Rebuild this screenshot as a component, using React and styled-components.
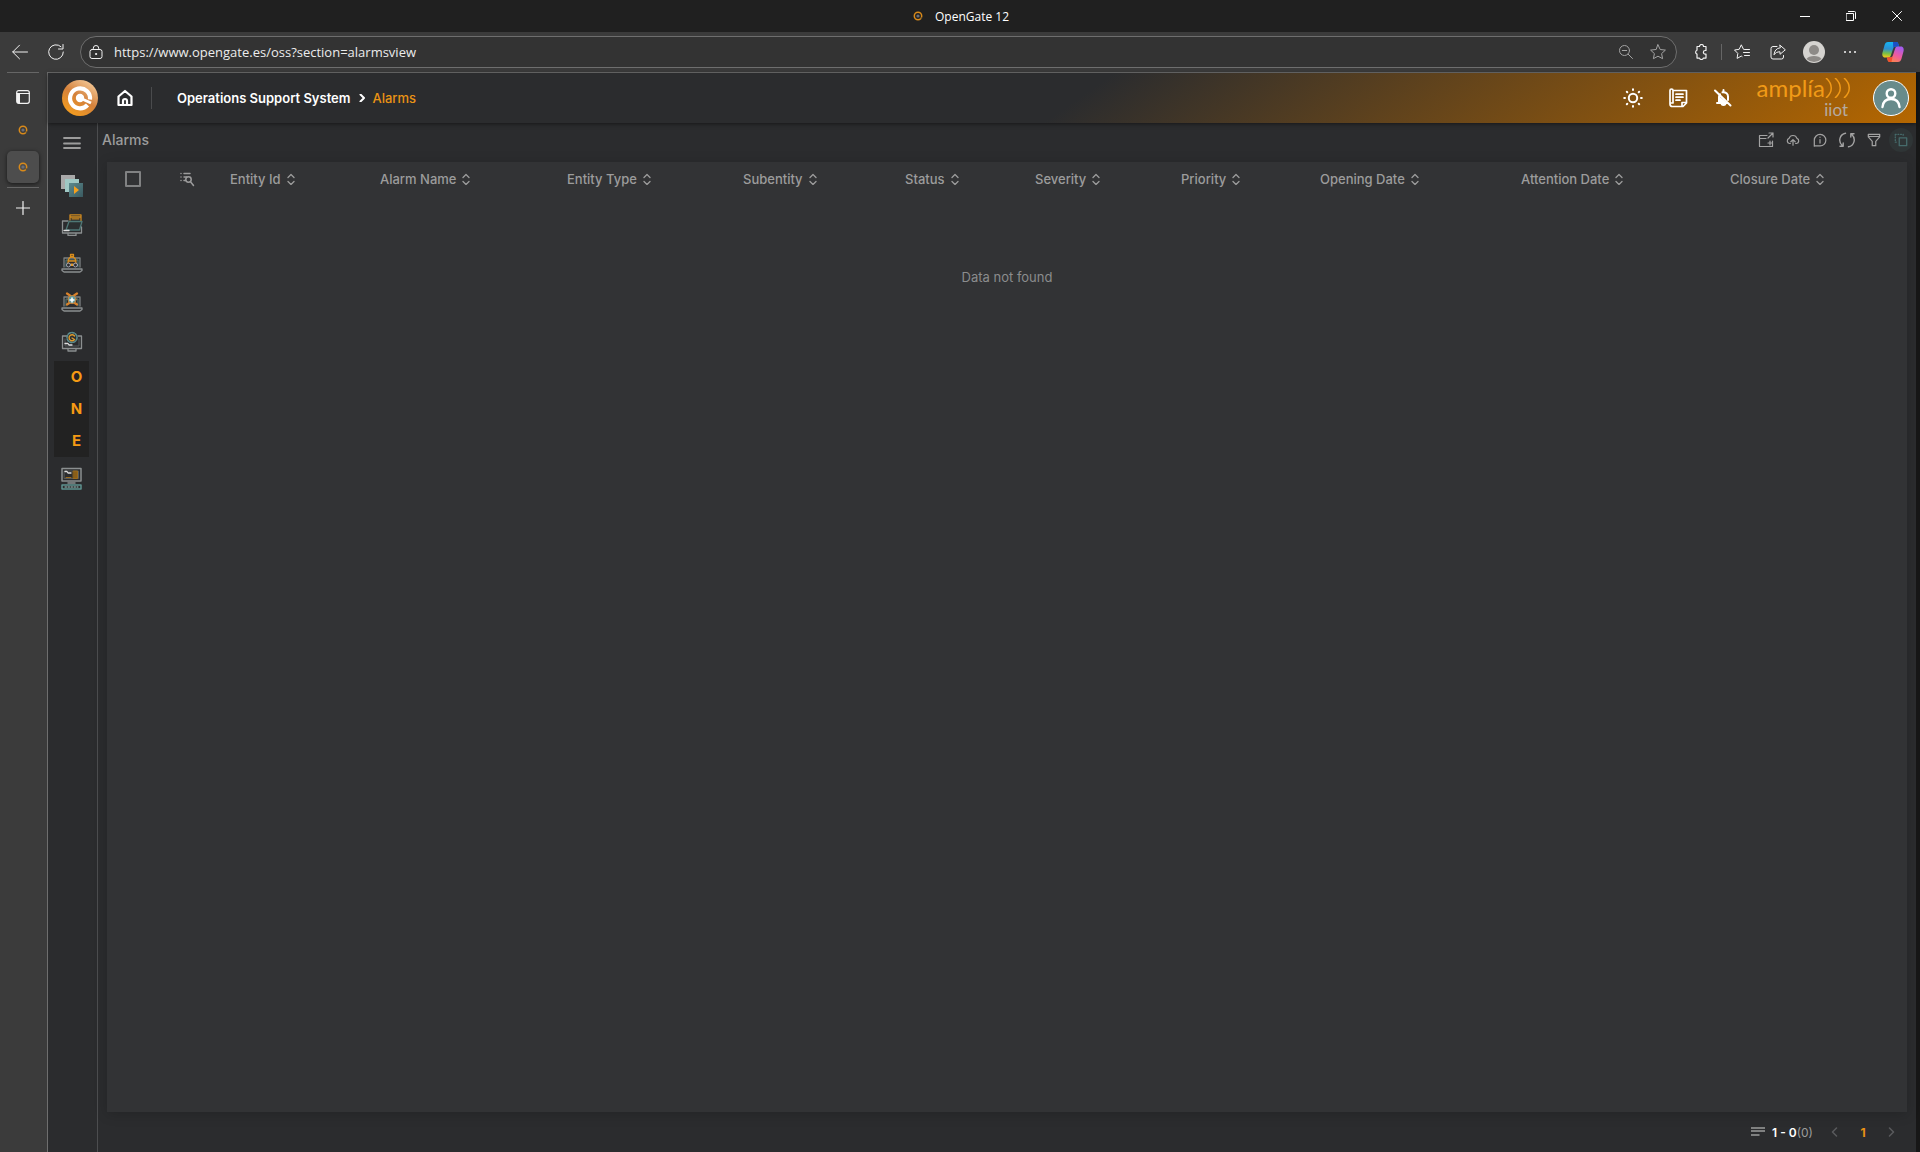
import React from 'react'
import styled, { createGlobalStyle } from 'styled-components'

const columns = [
  { label: 'Entity Id', width: 150 },
  { label: 'Alarm Name', width: 187 },
  { label: 'Entity Type', width: 176 },
  { label: 'Subentity', width: 162 },
  { label: 'Status', width: 130 },
  { label: 'Severity', width: 146 },
  { label: 'Priority', width: 139 },
  { label: 'Opening Date', width: 201 },
  { label: 'Attention Date', width: 209 },
  { label: 'Closure Date', width: 185 },
]

const Icon = ({ size = 16, box = 16, width = 1, children }) => (
  <svg width={size} height={size} viewBox={`0 0 ${box} ${box}`} fill="none" stroke="currentColor" strokeWidth={width} strokeLinecap="round" strokeLinejoin="round">
    {children}
  </svg>
)

const Favicon = () => (
  <svg width="10" height="10" viewBox="0 0 10 10" fill="none">
    <circle cx="5" cy="5" r="3.7" stroke="#d98a1a" strokeWidth="1.5" />
    <circle cx="5" cy="5" r="1.6" fill="#6b6f78" />
    <path d="M7.500 6.500l1.500 1" stroke="#54492f" strokeWidth="1.200" />
  </svg>
)

const GateLogo = () => (
  <svg width="36" height="36" viewBox="0 0 36 36" fill="none">
    <defs>
      <linearGradient id="gate" x1="0.2" y1="1" x2="0.85" y2="0">
        <stop offset="0" stopColor="#f7a01c" />
        <stop offset="0.5" stopColor="#d4813b" />
        <stop offset="1" stopColor="#f6cfa0" />
      </linearGradient>
    </defs>
    <circle cx="18" cy="18" r="18" fill="url(#gate)" />
    <path d="M28 19.500A10 10 0 1 0 25.500 25" stroke="#fff" strokeWidth="4.200" />
    <circle cx="18" cy="18" r="4.200" fill="#fff" />
    <path d="M19 18.500L29 23" stroke="#fff" strokeWidth="3" />
  </svg>
)

const CopilotLogo = () => (
  <svg width="22" height="20" viewBox="0 0 22 20">
    <defs>
      <linearGradient id="cpLeft" x1="0.4" y1="0" x2="0.3" y2="1">
        <stop offset="0" stopColor="#12b5f5" />
        <stop offset="0.45" stopColor="#2f8fd0" />
        <stop offset="0.75" stopColor="#7bc143" />
        <stop offset="1" stopColor="#f5c91a" />
      </linearGradient>
      <linearGradient id="cpRight" x1="0.7" y1="0" x2="0.2" y2="1">
        <stop offset="0" stopColor="#a45cf0" />
        <stop offset="0.5" stopColor="#ee5aa0" />
        <stop offset="1" stopColor="#fb8a45" />
      </linearGradient>
    </defs>
    <path d="M6 0h8c2 0 2.400 1.500 3 4.500h-3c-2 0-2.600 1-3 2.500L9 13c-.5 1.800-1.500 2.500-3 2.500H3C.5 15.500 0 13 .4 11L2.600 3C3.200 1 4.200 0 6 0z" fill="url(#cpLeft)" />
    <path d="M11 0h3.500c1.500 0 2 1.500 2.700 4.500H14c-1.500 0-2.200.8-2.700 2.200z" fill="#1b4fc4" />
    <path d="M16 20H8c-2 0-2.400-1.500-3-4.500h3c2 0 2.600-1 3-2.500l2-6c.5-1.800 1.500-2.500 3-2.500h3c2.500 0 3 2.500 2.600 4.500l-2.200 8c-.6 2-1.600 3-3.400 3z" fill="url(#cpRight)" />
    <path d="M5 15.500h3c1.500 0 2.300-.6 2.800-2L9.500 20H8c-2 0-2.400-1.500-3-4.500z" fill="#f4502c" />
  </svg>
)

const SortIcon = () => (
  <Icon size={12} box={12} width={1.3}>
    <path d="M3 4.500l3-3 3 3M3 8.500l3 3 3-3" />
  </Icon>
)

const Laptop = () => (
  <>
    <path d="M3 14V5h16v9" stroke="#7c8081" strokeWidth="1.300" />
    <path d="M5 14V7h12v7" stroke="#527d7b" />
    <path d="M1 16h20v1.500l-2 1.500H3l-2-1.500z" stroke="#8b8f90" strokeWidth="1.300" />
  </>
)

const Monitor = () => (
  <>
    <path d="M6 5H1.500v12.500h19V5H17" stroke="#8b8f90" strokeWidth="1.300" />
    <path d="M4 8v7h14V8" stroke="#55595a" />
    <path d="M7 18v2h8v-2" stroke="#8b8f90" strokeWidth="1.300" />
    <path d="M4 12.500h3l1 1.500h3" stroke="#ddd" strokeWidth="1.300" />
  </>
)

const MediaIcon = () => (
  <Icon size={22} box={22}>
    <defs>
      <linearGradient id="tile" x1="0" y1="0" x2="1" y2="1">
        <stop offset="0" stopColor="#5b8a8d" />
        <stop offset="1" stopColor="#3a5a60" />
      </linearGradient>
    </defs>
    <path d="M0 0h14v14H0z" fill="#a9a9a9" stroke="none" />
    <path d="M4 4h14v13H4z" fill="#9fc8c4" stroke="none" />
    <path d="M8 8h14v14H8z" fill="url(#tile)" stroke="none" />
    <path d="M13 11l5 4-5 4z" fill="#f5a01d" stroke="none" />
  </Icon>
)

const FolderIcon = () => (
  <Icon size={22} box={22}>
    <path d="M1.500 7v12h19v-6M1.500 7H7M7 20v1.500h8V20" stroke="#8b8f90" strokeWidth="1.300" />
    <path d="M9 6V.8h11V7M9 3h11M11 4.800h7" stroke="#d08a1f" strokeWidth="1.300" />
    <path d="M5 16L8 7.500h13L18.500 16z" stroke="#4e7775" strokeWidth="1.300" fill="#2b2f30" />
    <path d="M3 16.500h5" stroke="#ddd" strokeWidth="1.300" />
  </Icon>
)

const WorkerIcon = () => (
  <Icon size={22} box={22}>
    <Laptop />
    <path d="M7 10c0-4 1-6 4-6s4 2 4 6M7 8h8M9.500 1.500h3v2h-3z" stroke="#d98d1c" strokeWidth="1.300" />
    <path d="M9.500 10.500h3V13h-3z" fill="#e09a2c" stroke="none" />
    <circle cx="7.500" cy="12" r="2" stroke="#a4a4b0" />
    <circle cx="14.500" cy="12" r="2" stroke="#a4a4b0" />
  </Icon>
)

const ClockIcon = () => (
  <Icon size={22} box={22}>
    <Laptop />
    <path d="M6 1.500l3 2M16 1.500l-3 2M6 12.500l3-2M16 12.500l-3-2" stroke="#d9822b" strokeWidth="2.200" />
    <circle cx="11" cy="7.500" r="4" fill="#5b9aa0" stroke="#c9853a" />
    <path d="M11 6v4M9 8h4" stroke="#fff" strokeWidth="1.500" />
  </Icon>
)

const GearIcon = () => (
  <Icon size={22} box={22}>
    <Monitor />
    <circle cx="11" cy="6.500" r="5" stroke="#5b8b8c" strokeWidth="1.600" strokeDasharray="2.400 1.400" fill="#2b3032" />
    <path d="M13.500 5a3 3 0 1 0 0 3.500L11 7" stroke="#e09a2c" strokeWidth="1.400" />
  </Icon>
)

const TerminalIcon = () => (
  <Icon size={23} box={23}>
    <path d="M2 1.500h19v12.500H2zM8 16h7" stroke="#8b8f90" strokeWidth="1.500" />
    <path d="M4.500 4h14v7.500h-14z" stroke="#55595a" />
    <path d="M5 4.500h2l1 1.500h3" stroke="#ddd" strokeWidth="1.300" />
    <path d="M13.500 4h4v7.500h-4zM6 10.500h5" stroke="#9a6a1c" fill="#8a5e18" />
    <path d="M2 18h19v4H2z" stroke="#5f9290" strokeWidth="1.500" />
    <path d="M5 20h13" stroke="#a5c9c6" strokeDasharray="1.500 1.500" />
  </Icon>
)

const navBefore = [
  { name: 'Media', icon: <MediaIcon /> },
  { name: 'Inventory', icon: <FolderIcon /> },
  { name: 'Operations', icon: <WorkerIcon /> },
  { name: 'Schedules', icon: <ClockIcon /> },
  { name: 'Settings', icon: <GearIcon /> },
]

const TitleBar = () => (
  <TitleBarContainer>
    <TitleText><Favicon />OpenGate 12</TitleText>
    <WindowButtons>
      <WindowButton aria-label="Minimize"><Icon size={10} box={10}><path d="M0 5.500h10" /></Icon></WindowButton>
      <WindowButton aria-label="Restore"><Icon size={10} box={10}><path d="M.5 2.500h7v7h-7zM2.500 .5h6a1 1 0 0 1 1 1v6" /></Icon></WindowButton>
      <WindowButton aria-label="Close"><Icon size={10} box={10}><path d="M.5 .5l9 9M9.500 .5l-9 9" /></Icon></WindowButton>
    </WindowButtons>
  </TitleBarContainer>
)

const BrowserBar = () => (
  <BrowserBarContainer>
    <BrowserButton aria-label="Back"><Icon><path d="M15.500 8H.8M7.500 1.200L.7 8l6.800 6.800" /></Icon></BrowserButton>
    <BrowserButton aria-label="Reload"><Icon><path d="M15.300 8A7.300 7.300 0 1 1 13 2.700M15 .5V5h-4.500" /></Icon></BrowserButton>
    <AddressBar>
      <Icon size={14} box={14}><rect x="1" y="4.500" width="12" height="9" rx="2" /><path d="M4.300 4.500V3.200a2.700 2.700 0 0 1 5.400 0v1.300" /><circle cx="7" cy="9" r=".6" fill="currentColor" /></Icon>
      <UrlInput aria-label="Address" defaultValue="https://www.opengate.es/oss?section=alarmsview" />
      <BarButton $muted aria-label="Zoom"><Icon size={14} box={14}><circle cx="5.500" cy="5.500" r="5" /><path d="M9.200 9.200l4.300 4.300M3.300 5.500h4.400" /></Icon></BarButton>
      <BarButton $muted aria-label="Add favorite"><Icon><path d="M8 .8l2.200 4.700 5.200.6-3.800 3.500 1 5.100L8 12.200l-4.600 2.500 1-5.100L.6 6.100l5.200-.6z" /></Icon></BarButton>
    </AddressBar>
    <BrowserTools>
      <BarButton aria-label="Extensions"><Icon width={1.2}><path d="M4 2.500h2.500a2 2 0 0 1 4 0H13v4h-.8a1.800 1.800 0 0 0 0 3.600h.8v4h-2.700a2 2 0 0 1-3.800 0H4v-4a2 2 0 0 1 0-3.800z" /></Icon></BarButton>
      <BarDivider />
      <BarButton aria-label="Favorites"><Icon><path d="M9.500 5.300L7.300.8 5.200 5.300.5 6l3.300 3.400-.7 5 4.200-2.300.8.500M10.500 5.500h5M9.500 8.500h6M10.500 11.500h5" /></Icon></BarButton>
      <BarButton aria-label="Share"><Icon><path d="M7 2.500H3a2 2 0 0 0-2 2V13a2 2 0 0 0 2 2h8.500a2 2 0 0 0 2-2v-1.500M10 1.200l5.300 4.600L10 10.300V7.800c-2.800 0-4.500.9-6 3 .4-4 2.400-6.600 6-7z" /></Icon></BarButton>
      <BarButton aria-label="Profile">
        <svg width="22" height="22" viewBox="0 0 22 22"><circle cx="11" cy="11" r="11" fill="#d5d3d0" /><circle cx="11" cy="9" r="5" fill="#8d8a87" /><path d="M3.500 18c2-4 13-4 15 0a11 11 0 0 1-15 0z" fill="#8d8a87" /></svg>
      </BarButton>
      <BarButton aria-label="More"><Icon width={2}><path d="M3 8h.01M8 8h.01M13 8h.01" /></Icon></BarButton>
    </BrowserTools>
    <BarButton aria-label="Copilot"><CopilotLogo /></BarButton>
  </BrowserBarContainer>
)

const TabStrip = () => (
  <TabStripContainer>
    <StripLine />
    <StripButton aria-label="Vertical tabs" $top={8}><Icon size={14} box={14} width={1.2}><rect x=".7" y=".7" width="12.600" height="12.600" rx="2" /><path d="M.7 3.500h12.600" /><path d="M1 4h3v9H1z" fill="currentColor" stroke="none" /></Icon></StripButton>
    <StripButton aria-label="OpenGate 12" $top={1}><Favicon /></StripButton>
    <StripButton aria-label="OpenGate 12, current" $active $top={5}><Favicon /></StripButton>
    <StripGap />
    <StripLine />
    <StripButton aria-label="New tab" $top={4}><Icon size={14} box={14} width={1.2}><path d="M7 .5v13M.5 7h13" /></Icon></StripButton>
  </TabStripContainer>
)

const Header = () => (
  <HeaderContainer>
    <HomeLink href="#" aria-label="OpenGate"><GateLogo /></HomeLink>
    <HeaderButton aria-label="Home"><Icon size={18} box={18} width={2.2}><path d="M2.500 7.500L9 2l6.500 5.500V16h-13zM7 16v-4a2 2 0 0 1 4 0v4" /></Icon></HeaderButton>
    <HeaderDivider />
    <Breadcrumb aria-label="Breadcrumb">
      <CrumbLink href="#">Operations Support System</CrumbLink>
      <Icon size={8} box={8} width={2}><path d="M2.500 .5L6 4 2.500 7.500" /></Icon>
      <CrumbLink href="#" $current>Alarms</CrumbLink>
    </Breadcrumb>
    <HeaderActions>
      <HeaderButton aria-label="Theme"><Icon size={20} box={20} width={2}><circle cx="10" cy="10" r="4.200" /><path d="M10 1.200v.8M10 18v.8M1.200 10H2M18 10h.8M3.800 3.800l.5.500M15.700 15.700l.5.500M3.800 16.200l.5-.5M15.700 4.300l.5-.5" /></Icon></HeaderButton>
      <HeaderButton aria-label="Logs"><Icon size={20} box={20} width={1.7}><path d="M5 15V2.500a1.500 1.500 0 0 0-3 0V16a2.500 2.500 0 0 0 2.500 2.500H15l3.500-3.500V2.500H5M5 15H2M8 6.200h7M8 9.200h7M8 12.200h4M14 18v-3.500h4" /></Icon></HeaderButton>
      <HeaderButton aria-label="Notifications off"><Icon size={20} box={20} width={2}><path d="M4 15h11M6 14V9c0-1 .3-2 1-2.800M15 12V8.500C15 6 13 4 9.500 4.300M10.500 2v2M2 2.500l15.500 15" /><path d="M6 8l7 6H6zM7.500 15h6a3 3 0 0 1-6 0z" fill="currentColor" stroke="none" /></Icon></HeaderButton>
    </HeaderActions>
    <Brand>
      <BrandName>
        amplía
        <svg width="26" height="20" viewBox="0 0 26 20" fill="none" stroke="currentColor" strokeWidth="1.500"><path d="M1 0c7 6 7 14 0 20M10 0c7 6 7 14 0 20M19 0c7 6 7 14 0 20" /></svg>
      </BrandName>
      <BrandSub>iiot</BrandSub>
    </Brand>
    <UserButton aria-label="User"><Icon size={22} box={22} width={2.4}><circle cx="11" cy="6.500" r="4.300" /><path d="M2.500 20c.5-5.500 4-8 8.500-8s8 2.500 8.500 8" /></Icon></UserButton>
  </HeaderContainer>
)

const SideNav = () => (
  <SideNavContainer>
    <NavButton aria-label="Menu" $height={41}><Icon size={18} box={18} width={1.8}><path d="M1 3h16M1 8.500h16M1 13h16" /></Icon></NavButton>
    <NavGap />
    {navBefore.map((n) => (
      <NavButton key={n.name} aria-label={n.name} $height={39}>{n.icon}</NavButton>
    ))}
    <OneBlock>
      <OneLetter>O</OneLetter>
      <OneLetter>N</OneLetter>
      <OneLetter>E</OneLetter>
    </OneBlock>
    <NavButton aria-label="Terminal" $height={43}><TerminalIcon /></NavButton>
  </SideNavContainer>
)

const AlarmTable = () => (
  <Table>
    <colgroup>
      <col width="65" />
      <col width="50" />
      {columns.map((c) => <col key={c.label} width={c.width} />)}
    </colgroup>
    <thead>
      <tr>
        <Th $pad={18}><CheckBox type="checkbox" aria-label="Select all" /></Th>
        <Th><PlainButton aria-label="Search columns"><Icon size={15} box={15} width={1.5}><path d="M1 1.500h.01M4 1.500h6M1 5h.01M4 5h2.500M1 8.500h.01M4 8.500h1.500" /><circle cx="8.500" cy="7.500" r="2.700" /><path d="M10.500 9.800l3 3.700" /></Icon></PlainButton></Th>
        {columns.map((c) => (
          <Th key={c.label}><PlainButton>{c.label}<SortIcon /></PlainButton></Th>
        ))}
      </tr>
    </thead>
    <tbody>
      <tr>
        <EmptyCell colSpan={12}>Data not found</EmptyCell>
      </tr>
    </tbody>
  </Table>
)

const AlarmsView = () => (
  <ViewContainer>
    <ViewBar>
      <ViewTitle>Alarms</ViewTitle>
      <ViewTools>
        <ToolButton aria-label="Add to workspace"><Icon width={1.2}><path d="M9 3.500H1.500v11h13V9M1.500 6.500H8M10 11h4M12 9v4M10 6l5-5M11 1h4v4" /></Icon></ToolButton>
        <ToolButton aria-label="Upload"><Icon size={14} box={16} width={1.4}><path d="M5 12H4a3 3 0 0 1-.5-5.800 4.700 4.700 0 0 1 9 0A3 3 0 0 1 12 12h-1M8 14V7.500M5.500 10L8 7.500l2.500 2.500" /></Icon></ToolButton>
        <ToolButton aria-label="Info"><Icon size={14} box={16} width={1.4}><path d="M1.500 15V8A6.600 6.600 0 1 1 8 14.800H1.500M8 7.500v4M8 4.800v.1" /></Icon></ToolButton>
        <ToolButton aria-label="Refresh"><Icon width={1.4}><path d="M6.500 1.200A7 7 0 0 0 3 13.200M1 14.200h3.200V11M9.500 14.800A7 7 0 0 0 13 2.800M15 1.800h-3.200V5" /></Icon></ToolButton>
        <ToolButton aria-label="Filter"><Icon size={14} box={16} width={1.4}><path d="M1.500 1.500h13v3l-4.500 5v5H6v-5l-4.500-5zM1.500 4h13" /></Icon></ToolButton>
        <ToolButton aria-label="Select mode" $active><Icon size={14} box={16} width={1.5}><path d="M6 5.500h8.500v9H6z" /><path d="M1.500 1.500h9v2M1.500 1.500v9h2" strokeDasharray="1 2" /></Icon></ToolButton>
      </ViewTools>
    </ViewBar>
    <Panel><AlarmTable /></Panel>
    <Footer>
      <Icon size={14} box={14} width={1.5}><path d="M0 3h14M0 6h14M0 10h8" /></Icon>
      <FooterRange><b>1 - 0</b>(0)</FooterRange>
      <PageButton aria-label="Previous page" disabled><Icon size={10} box={10} width={1.5}><path d="M6.500 1l-4 4 4 4" /></Icon></PageButton>
      <PageButton $current>1</PageButton>
      <PageButton aria-label="Next page" disabled><Icon size={10} box={10} width={1.5}><path d="M3.500 1l4 4-4 4" /></Icon></PageButton>
    </Footer>
  </ViewContainer>
)

const App = () => {
  return (
    <Window>
      <GlobalStyle />
      <TitleBar />
      <BrowserBar />
      <Main>
        <TabStrip />
        <Page>
          <Header />
          <PageBody>
            <SideNav />
            <AlarmsView />
          </PageBody>
        </Page>
      </Main>
    </Window>
  )
}

export default App

const GlobalStyle = createGlobalStyle`
* { box-sizing: border-box; }
body {
  margin: 0;
  background: #171717;
  color: #9c9c9c;
  font-family: Inter, "Liberation Sans", sans-serif;
  font-size: 13px;
}
button {
  padding: 0;
  border: 0;
  background: none;
  color: inherit;
  font: inherit;
}
a { text-decoration: none; }
svg { display: block; flex: none; }
`;

const Window = styled.div`
  display: flex;
  flex-direction: column;
  min-height: 100vh;
`;

const TitleBarContainer = styled.div`
  display: grid;
  grid-template-columns: 1fr auto 1fr;
  align-items: center;
  height: 32px;
  background: #202020;
  color: #fff;
`;

const TitleText = styled.div`
  grid-column: 2;
  display: flex;
  align-items: center;
  gap: 12px;
  padding-left: 2px;
  font-family: "Open Sans", sans-serif;
  font-size: 12px;
`;

const WindowButtons = styled.div`
  display: flex;
  justify-content: flex-end;
`;

const WindowButton = styled.button`
  display: grid;
  place-items: center;
  width: 46px;
  height: 32px;
`;

const BrowserBarContainer = styled.div`
  display: flex;
  align-items: center;
  height: 40px;
  padding: 0 11px 0 2px;
  background: #3b3b3b;
  color: #f2f2f2;
`;

const BrowserButton = styled.button`
  display: grid;
  place-items: center;
  width: 36px;
  height: 32px;
`;

const AddressBar = styled.div`
  flex: 1;
  display: flex;
  align-items: center;
  height: 32px;
  margin-left: 6px;
  padding: 0 2px 0 8px;
  border: 1px solid #6e6e6e;
  border-radius: 16px;
  background: #333;
`;

const UrlInput = styled.input`
  flex: 1;
  min-width: 0;
  padding: 0 11px;
  border: 0;
  outline: 0;
  background: none;
  color: #ececec;
  font-family: "Open Sans", sans-serif;
  font-size: 13px;
`;

const BarButton = styled.button`
  display: grid;
  place-items: center;
  width: 32px;
  height: 32px;
  color: ${(p) => (p.$muted ? '#a3a3a3' : '#f2f2f2')};
`;

const BrowserTools = styled.div`
  display: flex;
  align-items: center;
  gap: 4px;
  margin: 0 11px 0 8px;
`;

const BarDivider = styled.span`
  width: 1px;
  height: 16px;
  background: #666;
`;

const Main = styled.div`
  flex: 1;
  display: flex;
`;

const TabStripContainer = styled.div`
  display: flex;
  flex-direction: column;
  align-items: center;
  width: 47px;
  padding-right: 1px;
  background: #3b3b3b;
  color: #f2f2f2;
`;

const StripLine = styled.span`
  width: 32px;
  height: 1px;
  background: #666;
`;

const StripGap = styled.span`
  height: 4px;
`;

const StripButton = styled.button`
  display: grid;
  place-items: center;
  width: 32px;
  height: 32px;
  margin-top: ${(p) => p.$top}px;
  border-radius: 5px;
  background: ${(p) => (p.$active ? '#4d4d4d' : 'none')};
  box-shadow: ${(p) => (p.$active ? '0 1px 4px rgba(0, 0, 0, 0.6)' : 'none')};
`;

const Page = styled.div`
  flex: 1;
  min-width: 0;
  display: flex;
  flex-direction: column;
  margin-right: 4px;
  border-top: 1px solid #6e6e6e;
  border-left: 1px solid #6e6e6e;
  background: #2b2c2e;
`;

const HeaderContainer = styled.header`
  position: relative;
  display: flex;
  align-items: center;
  height: 50px;
  padding: 0 7px 0 14px;
  background: linear-gradient(145deg, #2b2c2e 55%, #b56700 100%);
  box-shadow: 0 1px 4px rgba(0, 0, 0, 0.5);
  color: #fff;
`;

const HomeLink = styled.a`
  margin-right: 12px;
`;

const HeaderButton = styled.button`
  display: grid;
  place-items: center;
  width: 29px;
  height: 32px;
`;

const HeaderDivider = styled.span`
  width: 1px;
  height: 22px;
  margin: 0 25px 0 12px;
  background: #4a4b4d;
`;

const Breadcrumb = styled.nav`
  display: flex;
  align-items: center;
  gap: 7px;
  padding-bottom: 1px;
  font-size: 13px;
`;

const CrumbLink = styled.a`
  color: ${(p) => (p.$current ? '#ea9314' : '#fff')};
  font-weight: ${(p) => (p.$current ? 500 : 600)};
`;

const HeaderActions = styled.div`
  display: flex;
  gap: 16px;
  margin-left: auto;
`;

const Brand = styled.div`
  display: flex;
  flex-direction: column;
  align-items: flex-end;
  width: 92px;
  margin: 0 22px;
`;

const BrandName = styled.div`
  display: flex;
  align-items: center;
  color: #f19a17;
  font-family: Lato, sans-serif;
  font-size: 24px;
  font-weight: 400;
  line-height: 24px;
`;

const BrandSub = styled.div`
  padding-right: 3px;
  color: #b5aaa0;
  font-family: Lato, sans-serif;
  font-size: 17px;
  line-height: 20px;
`;

const UserButton = styled.button`
  display: grid;
  place-items: center;
  width: 36px;
  height: 36px;
  border: 1px solid #fff;
  border-radius: 50%;
  background: #688b8b;
`;

const PageBody = styled.div`
  flex: 1;
  display: flex;
`;

const SideNavContainer = styled.nav`
  display: flex;
  flex-direction: column;
  align-items: center;
  width: 50px;
  padding-right: 2px;
  border-right: 1px solid #4c4d4f;
`;

const NavButton = styled.button`
  display: grid;
  place-items: center;
  width: 47px;
  height: ${(p) => p.$height}px;
`;

const NavGap = styled.span`
  height: 2px;
`;

const OneBlock = styled.div`
  display: flex;
  flex-direction: column;
  width: 35px;
  background: #222;
`;

const OneLetter = styled.a`
  padding-left: 10px;
  color: #f59a14;
  font-size: 15px;
  font-weight: 700;
  line-height: 32px;
  text-align: center;
`;

const ViewContainer = styled.main`
  flex: 1;
  min-width: 0;
  display: flex;
  flex-direction: column;
`;

const ViewBar = styled.div`
  display: flex;
  align-items: center;
  justify-content: space-between;
  height: 39px;
  padding: 0 3px 6px 4px;
`;

const ViewTitle = styled.h1`
  margin: 0;
  font-size: 14px;
  font-weight: 500;
`;

const ViewTools = styled.div`
  display: flex;
  gap: 3px;
`;

const ToolButton = styled.button`
  display: grid;
  place-items: center;
  width: 24px;
  height: 24px;
  border-radius: 50%;
  color: ${(p) => (p.$active ? '#466b6b' : '#a3a3a3')};
  background: ${(p) => (p.$active ? '#2f3536' : 'none')};
`;

const Panel = styled.section`
  flex: 1;
  margin: 0 9px;
  background: #323335;
  box-shadow: 0 2px 12px rgba(0, 0, 0, 0.18);
`;

const Table = styled.table`
  width: 100%;
  table-layout: fixed;
  border-collapse: collapse;
`;

const Th = styled.th`
  height: 34px;
  padding: 0 0 0 ${(p) => p.$pad || 8}px;
  font-weight: 500;
  text-align: left;
  white-space: nowrap;
`;

const PlainButton = styled.button`
  display: flex;
  align-items: center;
  gap: 4px;
`;

const CheckBox = styled.input`
  appearance: none;
  display: block;
  width: 16px;
  height: 16px;
  margin: 0;
  border: 2px solid #818283;
  border-radius: 1px;
`;

const EmptyCell = styled.td`
  height: 162px;
  padding: 0;
  color: #8b8c8d;
  text-align: center;
`;

const Footer = styled.footer`
  display: flex;
  align-items: center;
  height: 40px;
  padding-right: 11px;
  justify-content: flex-end;
  font-size: 12px;
`;

const FooterRange = styled.span`
  margin: 0 8px 0 7px;
  b { color: #fff; font-weight: 600; }
`;

const PageButton = styled.button`
  display: grid;
  place-items: center;
  width: 28px;
  height: 24px;
  color: ${(p) => (p.$current ? '#ea9314' : '#5a5b5d')};
  font-weight: 700;
`;
